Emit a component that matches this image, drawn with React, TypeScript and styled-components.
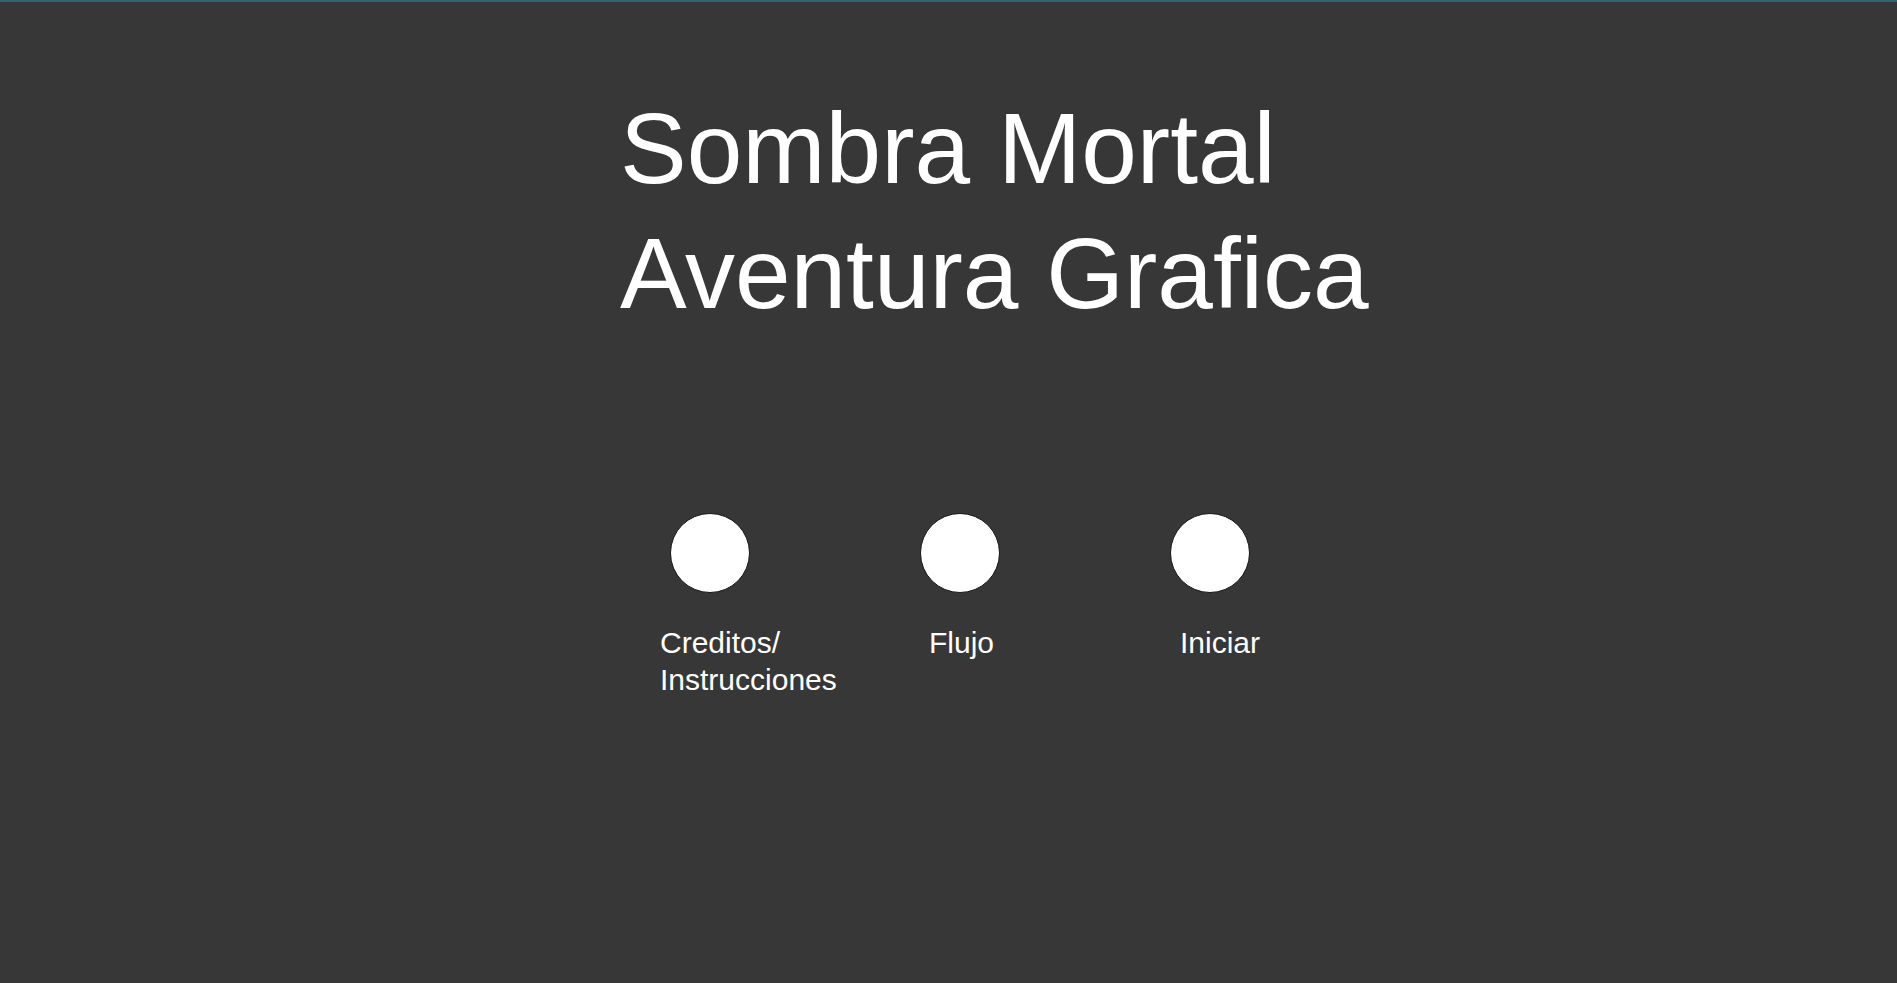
import React from "react";
import styled, { createGlobalStyle } from "styled-components";

const GlobalStyle = createGlobalStyle`
  html, body {
    margin: 0;
    padding: 0;
    background: #373737;
  }
  body {
    font-family: "Liberation Sans", Arial, sans-serif;
  }
`;

const Page = styled.main`
  box-sizing: border-box;
  min-height: 100vh;
  background: #373737;
  border-top: 2px solid #2c6676;
  padding: 84px 0 0 620px;
  color: #ffffff;
`;

const Title = styled.h1`
  margin: 0;
  font-family: "Liberation Sans", Arial, sans-serif;
  font-weight: 400;
  font-size: 100px;
  line-height: 125px;
  color: #ffffff;
  white-space: nowrap;
`;

const TitleLine = styled.span`
  display: block;
`;

const Menu = styled.nav`
  display: grid;
  grid-template-columns: repeat(3, 250px);
  margin-top: 177px;
  padding-left: 50px;
`;

const MenuItem = styled.div`
  display: flex;
  flex-direction: column;
  align-items: flex-start;
`;

const Dot = styled.button`
  box-sizing: border-box;
  width: 80px;
  height: 80px;
  padding: 0;
  border-radius: 50%;
  background: #ffffff;
  border: 1px solid #161616;
  cursor: pointer;
`;

const Label = styled.span<{ $offset: number }>`
  margin-top: 31px;
  margin-left: ${(p) => p.$offset}px;
  font-family: "Liberation Sans", Arial, sans-serif;
  font-size: 30px;
  line-height: 37px;
  color: #ffffff;
  white-space: nowrap;
`;

const items = [
  { lines: ["Creditos/", "Instrucciones"], offset: -10 },
  { lines: ["Flujo"], offset: 9 },
  { lines: ["Iniciar"], offset: 10 },
];

export default function App() {
  return (
    <>
      <GlobalStyle />
      <Page>
        <Title>
          <TitleLine>Sombra Mortal</TitleLine>
          <TitleLine>Aventura Grafica</TitleLine>
        </Title>
        <Menu>
          {items.map((it) => (
            <MenuItem key={it.lines.join("")}>
              <Dot aria-label={it.lines.join(" ")} />
              <Label $offset={it.offset}>
                {it.lines.map((l, i) => (
                  <React.Fragment key={l}>
                    {i > 0 && <br />}
                    {l}
                  </React.Fragment>
                ))}
              </Label>
            </MenuItem>
          ))}
        </Menu>
      </Page>
    </>
  );
}
